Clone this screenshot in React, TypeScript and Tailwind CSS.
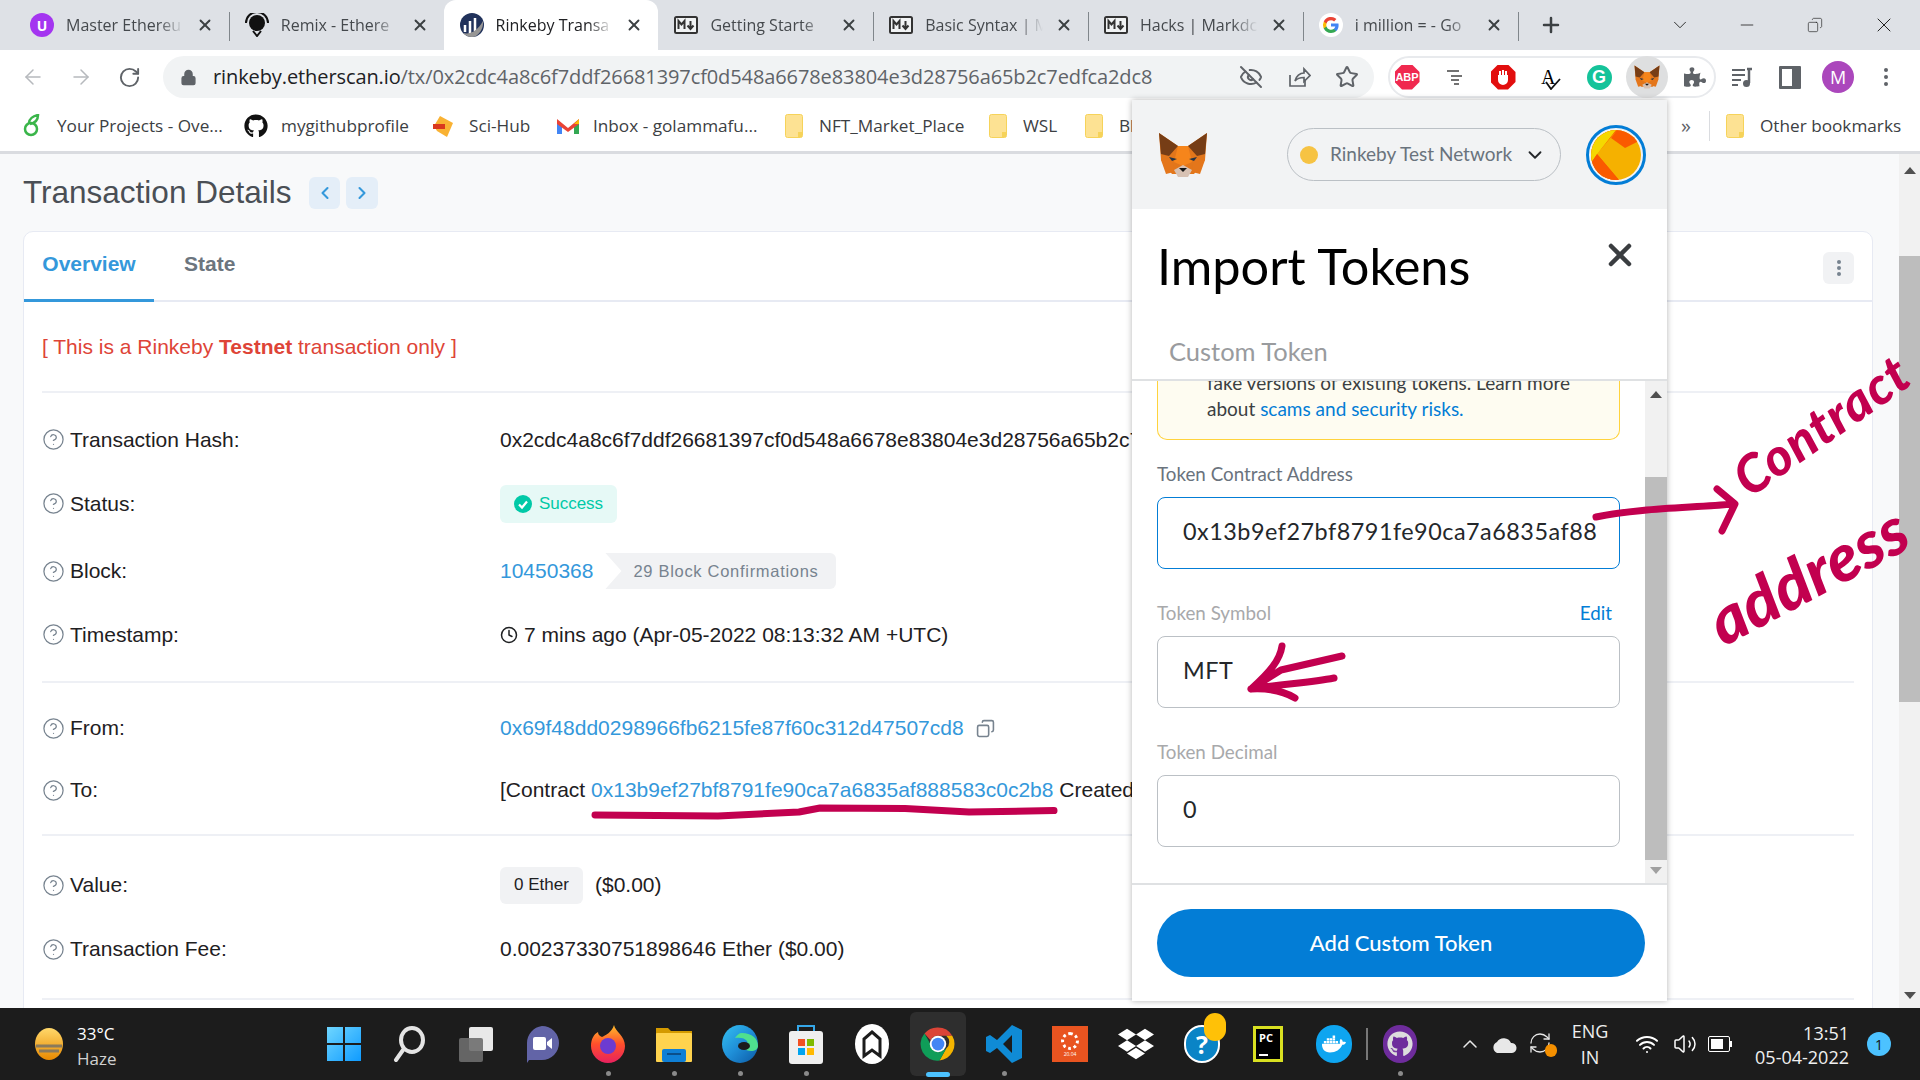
import React from "react";
import { ArrowLeft, ArrowRight, RotateCw, X, Plus, ChevronDown, ChevronUp, Minus, EyeOff, Star, Lock, ChevronLeft, ChevronRight, Copy, Clock, CircleHelp, Wifi, Volume2, RefreshCw } from "lucide-react";
import { FaGithub, FaDocker, FaDropbox, FaPuzzlePiece } from "react-icons/fa";

const MFox = ({ s = 50 }: { s?: number }) => (
  <svg width={s} height={s * 0.92} viewBox="0 0 50 46">
    <polygon points="1,1 20,14 30,14 49,1 47,28 36,42 14,42 3,28" fill="#e2761b" />
    <polygon points="1,1 20,14 11,24 3,22" fill="#763d16" />
    <polygon points="49,1 30,14 39,24 47,22" fill="#763d16" />
    <polygon points="20,14 30,14 34,30 25,34 16,30" fill="#f6851b" />
    <polygon points="3,28 14,26 16,40 8,42" fill="#e4761b" />
    <polygon points="47,28 36,26 34,40 42,42" fill="#e4761b" />
    <polygon points="11,25 19,27 14,29" fill="#233447" />
    <polygon points="39,25 31,27 36,29" fill="#233447" />
    <polygon points="16,38 25,33 34,38 30,45 20,45" fill="#d7c1b3" />
    <polygon points="21,36 29,36 25,40" fill="#161616" />
  </svg>
);

const ChromeIcon = ({ s = 32 }: { s?: number }) => (
  <svg width={s} height={s} viewBox="0 0 48 48">
    <path d="M24 2a22 22 0 0 1 19 11H24a11 11 0 0 0-10 6L6 10A22 22 0 0 1 24 2z" fill="#db4437" />
    <path d="M43 13a22 22 0 0 1-17 33l9-16a11 11 0 0 0 0-17z" fill="#f4b400" />
    <path d="M26 46A22 22 0 0 1 6 10l9 16a11 11 0 0 0 11 9l9-5z" fill="#0f9d58" />
    <circle cx="24" cy="24" r="11" fill="#fff" />
    <circle cx="24" cy="24" r="8.5" fill="#4285f4" />
  </svg>
);

const Folder = () => (
  <svg width="18" height="24" viewBox="0 0 18 24">
    <rect x="0.5" y="0.5" width="17" height="23" rx="2" fill="#fde293" stroke="#f6d35a" />
    <rect x="13" y="18" width="4" height="5" fill="#f6d35a" />
  </svg>
);

const MD = () => (
  <svg width="24" height="18" viewBox="0 0 24 18">
    <rect x="1" y="1" width="22" height="16" rx="1.5" fill="#f1f3f4" stroke="#333" strokeWidth="2" />
    <path d="M4.5 13V5l3 3.5 3-3.5v8M16.5 5v7M13.5 9.500l3 3.500 3-3.500" fill="none" stroke="#333" strokeWidth="2" />
  </svg>
);

const tabs = [
  { t: "Master Ethereu", i: <div className="flex h-6 w-6 items-center justify-center rounded-full bg-[#a435f0] text-[14px] font-bold text-white">U</div> },
  { t: "Remix - Ethere", i: <svg width="24" height="24" viewBox="0 0 24 24"><circle cx="12" cy="10" r="8" fill="#111" /><path d="M1 10a11 11 0 0 1 22 0M8 18l4 5 4-5" fill="none" stroke="#111" strokeWidth="2" /></svg> },
  { t: "Rinkeby Transa", a: true, i: <svg width="24" height="24" viewBox="0 0 24 24"><circle cx="12" cy="12" r="12" fill="#21325b" /><path d="M5 12v7M10 8v13M15 5v13" stroke="#fff" strokeWidth="2.500" /><path d="M3 20c8 2 15-3 20-12 1 8-5 16-11 16-4 0-7-2-9-4z" fill="#979695" /></svg> },
  { t: "Getting Starte", i: <MD /> },
  { t: "Basic Syntax | M", i: <MD /> },
  { t: "Hacks | Markdc", i: <MD /> },
  { t: "i million = - Go", i: <svg width="24" height="24" viewBox="0 0 24 24"><circle cx="12" cy="12" r="12" fill="#fff" /><path d="M19.600 12.200c0-.6-.1-1.100-.2-1.600H12v3h4.300a3.700 3.700 0 0 1-1.600 2.400v2h2.600c1.500-1.400 2.300-3.400 2.300-5.800z" fill="#4285f4" /><path d="M12 20c2.200 0 4-.7 5.300-2l-2.600-2a4.800 4.800 0 0 1-7.200-2.500H4.800v2.100A8 8 0 0 0 12 20z" fill="#34a853" /><path d="M7.500 13.500a4.800 4.800 0 0 1 0-3V8.400H4.800a8 8 0 0 0 0 7.200z" fill="#fbbc05" /><path d="M12 7.200c1.200 0 2.300.4 3.100 1.200l2.300-2.300A8 8 0 0 0 4.800 8.400l2.700 2.100A4.800 4.800 0 0 1 12 7.200z" fill="#ea4335" /></svg> },
];

function TabBar() {
  return (
    <div className="flex h-[50px] shrink-0 items-stretch bg-[#dee1e6] pl-[14px] font-['Open_Sans',sans-serif] text-[16px] text-[#45494d]">
      {tabs.map((t, i) => (
        <div key={i} className={`relative flex w-[214.800px] items-center gap-[12px] pl-[16px] pr-[15px] ${t.a ? "rounded-t-[12px] bg-white text-[#202124]" : ""}`}>
          <span className="flex w-[24px] shrink-0 justify-center">{t.i}</span>
          <span className="min-w-0 flex-1 overflow-hidden whitespace-nowrap [mask-image:linear-gradient(to_right,black_78%,transparent)]">{t.t}</span>
          <X size={18} strokeWidth={2.500} className="shrink-0 text-[#3c4043]" />
          {i !== 1 && i !== 2 && <span className="absolute -right-px top-[12px] h-[29px] w-px bg-[#80868b]" />}
        </div>
      ))}
      <div className="flex w-[66px] items-center justify-center">
        <Plus size={24} strokeWidth={2.500} className="text-[#3c4043]" />
      </div>
      <div className="flex flex-1 items-center text-[#222]">
        <ChevronDown size={22} strokeWidth={1} className="ml-[85px]" />
        <Minus size={20} strokeWidth={1} className="ml-[46px]" />
        <Copy size={16} strokeWidth={1} className="ml-[50px] -scale-x-100" />
        <X size={24} strokeWidth={1} className="ml-[49px]" />
      </div>
    </div>
  );
}

const tool = "flex w-[48px] shrink-0 items-center justify-center";

function Toolbar() {
  return (
    <div className="flex h-[54px] shrink-0 items-center bg-white pl-[9px] text-[#5f6368]">
      <span className={tool}><ArrowLeft size={24} strokeWidth={1.500} className="text-[#b6b9bd]" /></span>
      <span className={tool}><ArrowRight size={24} strokeWidth={1.500} className="text-[#b6b9bd]" /></span>
      <span className={tool}><RotateCw size={23} strokeWidth={2} /></span>
      <div className="ml-[10px] flex h-[42px] w-[1211px] items-center rounded-full bg-[#f1f3f4] pl-[17px] pr-[3px]">
        <Lock size={17} fill="#5f6368" strokeWidth={2} />
        <span className="ml-[16px] flex-1 whitespace-nowrap font-['Open_Sans',sans-serif] text-[20px] tracking-[-0.1px] text-[#5f6368]"><span className="text-[#202124]">rinkeby.etherscan.io</span>/tx/0x2cdc4a8c6f7ddf26681397cf0d548a6678e83804e3d28756a65b2c7edfca2dc8</span>
        <span className={tool}><EyeOff size={24} strokeWidth={2} /></span>
        <span className={tool}>
          <svg width="24" height="24" viewBox="0 0 24 24" fill="none" stroke="#5f6368" strokeWidth="1.700"><path d="M3 10v11h15v-6" /><path d="M8 16c1-5 5-8 9-8V4l6 6.500-6 6v-4c-4 0-7 1-9 3.500z" /></svg>
        </span>
        <span className={tool}><Star size={24} strokeWidth={2} /></span>
      </div>
      <div className="ml-[14px] flex h-[42px] w-[328px] items-center rounded-full border-2 border-[#e8eaed]">
        <div className="-mx-[7px] flex items-center">
          <span className={tool}>
            <span className="flex h-[25px] w-[25px] items-center justify-center bg-[#f0294f] font-['Liberation_Sans',sans-serif] text-[11px] font-bold text-white [clip-path:polygon(30%_0,70%_0,100%_30%,100%_70%,70%_100%,30%_100%,0_70%,0_30%)]">ABP</span>
          </span>
          <span className={tool}>
            <svg width="20" height="20" viewBox="0 0 20 20" stroke="#444" strokeWidth="1.600"><path d="M2 4h12M6 9h11M6 13h8M9 17h5" /></svg>
          </span>
          <span className={tool}>
            <span className="flex h-[25px] w-[25px] items-center justify-center bg-[#e20e0e] text-white [clip-path:polygon(30%_0,70%_0,100%_30%,100%_70%,70%_100%,30%_100%,0_70%,0_30%)]">
              <svg width="14" height="16" viewBox="0 0 14 16" fill="#fff"><path d="M2 6h10v5a5 5 0 0 1-10 0zM3 2h2v6H3zM6 1h2v6H6zM9 2h2v6H9z" /></svg>
            </span>
          </span>
          <span className={tool}>
            <span className="relative block h-[26px] w-[24px]">
              <span className="absolute left-[2px] top-[-2px] font-['Liberation_Serif',serif] text-[20px] text-black">A</span>
              <svg className="absolute bottom-0 left-[6px]" width="17" height="12" viewBox="0 0 17 12" fill="none" stroke="#111" strokeWidth="1.800"><path d="M1 4l5 7 9-10" /></svg>
            </span>
          </span>
          <span className={tool}>
            <span className="flex h-[25px] w-[25px] items-center justify-center rounded-full bg-[#15c39a] font-['Liberation_Sans',sans-serif] text-[18px] font-bold text-white">G</span>
          </span>
          <span className={tool}>
            <span className="flex h-[42px] w-[42px] items-center justify-center rounded-full bg-[#dedfe0]"><MFox s={26} /></span>
          </span>
          <span className={tool}><FaPuzzlePiece size={22} color="#5f6368" /></span>
        </div>
      </div>
      <span className={`${tool} ml-[2px]`}>
        <svg width="24" height="24" viewBox="0 0 24 24" fill="none" stroke="#5f6368" strokeWidth="2"><path d="M2 5h13M2 10h13M2 15h9M2 20h6" /><path d="M19 4v14" strokeWidth="2.500" /><circle cx="16.500" cy="18.500" r="2.500" fill="#5f6368" /><path d="M17 4h5" strokeWidth="2.500" /></svg>
      </span>
      <span className={tool}>
        <span className="flex h-[23px] w-[22px] justify-start rounded-[1px] border-[3px] border-r-[9px] border-[#5f6368]" />
      </span>
      <span className={tool}>
        <span className="flex h-[32px] w-[32px] items-center justify-center rounded-full bg-[#ab47bc] font-['Open_Sans',sans-serif] text-[18px] text-white">M</span>
      </span>
      <span className={`${tool} flex-col gap-[3px]`}>
        <i className="h-[4px] w-[4px] rounded-full bg-[#5f6368]" />
        <i className="h-[4px] w-[4px] rounded-full bg-[#5f6368]" />
        <i className="h-[4px] w-[4px] rounded-full bg-[#5f6368]" />
      </span>
    </div>
  );
}

const Bm = ({ w, icon, t }: { w: number; icon: React.ReactNode; t: string }) => (
  <div className="flex items-center gap-[13px]" style={{ width: w }}>
    <span className="flex w-[24px] shrink-0 justify-center">{icon}</span>
    <span className="whitespace-nowrap">{t}</span>
  </div>
);

function Bookmarks() {
  return (
    <div className="flex h-[50px] shrink-0 items-center border-b-[3px] border-[#dadce0] bg-white pb-[3px] pl-[20px] font-['Open_Sans',sans-serif] text-[17.200px] text-[#3c4043]">
      <Bm w={224} t="Your Projects - Ove..." icon={<svg width="18" height="24" viewBox="0 0 18 24" fill="none" stroke="#3ab54a" strokeWidth="2.500"><circle cx="8" cy="15" r="6" /><path d="M6 9c0-4 4-7 9-8 0 5-3 8-8 9" /></svg>} />
      <Bm w={188} t="mygithubprofile" icon={<FaGithub size={24} color="#111" />} />
      <Bm w={124} t="Sci-Hub" icon={<svg width="24" height="24" viewBox="0 0 24 24"><polygon points="8,2 21,9 15,23 5,17 2,12" fill="#f9b233" /><rect x="1" y="10" width="12" height="5" fill="#d9381e" /></svg>} />
      <Bm w={226} t="Inbox - golammafu..." icon={<svg width="24" height="18" viewBox="0 0 24 18"><path d="M1 3v14h5V7z" fill="#4285f4" /><path d="M23 3v14h-5V7z" fill="#34a853" /><path d="M1 2l11 9 11-9v5l-11 8L1 7z" fill="#ea4335" /><path d="M18 7l5-5v5z" fill="#fbbc04" /></svg>} />
      <Bm w={204} t="NFT_Market_Place" icon={<Folder />} />
      <Bm w={96} t="WSL" icon={<Folder />} />
      <Bm w={593} t="Bl" icon={<Folder />} />
      <span className="w-[22px] text-center text-[20px] text-[#5f6368]">»</span>
      <span className="ml-[12px] mr-[13px] h-[30px] w-px bg-[#dadce0]" />
      <Bm w={170} t="Other bookmarks" icon={<Folder />} />
    </div>
  );
}

const Row = ({ label, h, children }: { label: string; h: number; children: React.ReactNode }) => (
  <div className="flex items-center" style={{ height: h }}>
    <div className="flex w-[458px] items-center gap-[5px]">
      <CircleHelp size={23} strokeWidth={1.300} className="text-[#77838f]" />
      <span>{label}</span>
    </div>
    <div className="flex items-center whitespace-nowrap">{children}</div>
  </div>
);

function Page() {
  return (
    <div className="flex min-h-0 flex-1 bg-[#f8f9fa]">
      <div className="min-w-0 flex-1 overflow-hidden font-['Liberation_Sans',sans-serif] text-[21px] text-[#1e2022]">
        <div className="flex h-[77px] items-center pl-[23px] pt-[1px]">
          <h1 className="text-[31.500px] text-[#4a4f55]">Transaction Details</h1>
          <span className="ml-[18px] flex h-[32px] w-[31px] items-center justify-center rounded-md bg-[#e4eef8]"><ChevronLeft size={20} strokeWidth={2.500} className="text-[#3498db]" /></span>
          <span className="ml-[6px] flex h-[32px] w-[32px] items-center justify-center rounded-md bg-[#e4eef8]"><ChevronRight size={20} strokeWidth={2.500} className="text-[#3498db]" /></span>
        </div>
        <div className="ml-[23px] mr-[26px] h-[900px] rounded-t-[10px] border border-[#e7eaf3] bg-white">
          <div className="flex h-[70px] items-end justify-between border-b-2 border-[#e7eaf3]">
            <div className="flex h-[70px]">
              <span className="-mb-[2px] flex w-[130px] items-center justify-center border-b-[3px] border-[#3498db] pb-[2px] font-bold text-[#3498db]">Overview</span>
              <span className="ml-[30px] flex items-center pb-[2px] font-bold text-[#6c757e]">State</span>
            </div>
            <span className="mb-[16px] mr-[18px] flex h-[32px] w-[31px] flex-col items-center justify-center gap-[2px] rounded-md bg-[#f1f2f4]">
              <i className="h-[4px] w-[4px] rounded-full bg-[#77838f]" />
              <i className="h-[4px] w-[4px] rounded-full bg-[#77838f]" />
              <i className="h-[4px] w-[4px] rounded-full bg-[#77838f]" />
            </span>
          </div>
          <div className="mx-[18px]">
            <div className="flex h-[91px] items-center border-b-2 border-[#eef0f5] text-[#de4437]">
              [ This is a Rinkeby&nbsp;<b>Testnet</b>&nbsp;transaction only ]
            </div>
            <div className="border-b-2 border-[#eef0f5] pb-[19px] pt-[14px]">
              <Row label="Transaction Hash:" h={65}>0x2cdc4a8c6f7ddf26681397cf0d548a6678e83804e3d28756a65b2c7edfca2dc8</Row>
              <Row label="Status:" h={63}>
                <span className="flex h-[38px] w-[117px] items-center justify-center gap-[7px] rounded-md bg-[#e6f9f6] text-[17px] text-[#00c9a7]">
                  <svg width="18" height="18" viewBox="0 0 18 18"><circle cx="9" cy="9" r="9" fill="#00c9a7" /><path d="M5 9.500l3 3 5-6" fill="none" stroke="#fff" strokeWidth="2.200" /></svg>
                  Success
                </span>
              </Row>
              <Row label="Block:" h={72}>
                <span className="text-[#3498db]">10450368</span>
                <span className="ml-[12px] flex h-[36px] w-[231px] items-center rounded-r-md bg-[#f1f2f4] pl-[28px] text-[16.500px] tracking-[0.7px] text-[#77838f] [clip-path:polygon(0_0,100%_0,100%_100%,0_100%,16px_50%)]">29 Block Confirmations</span>
              </Row>
              <Row label="Timestamp:" h={55}>
                <Clock size={18} strokeWidth={2} className="mr-[6px]" />7 mins ago (Apr-05-2022 08:13:32 AM +UTC)
              </Row>
            </div>
            <div className="border-b-2 border-[#eef0f5] pb-[13px] pt-[14px]">
              <Row label="From:" h={62}>
                <span className="text-[#3498db]">0x69f48dd0298966fb6215fe87f60c312d47507cd8</span>
                <Copy size={19} strokeWidth={2} className="ml-[12px] -scale-x-100 text-[#77838f]" />
              </Row>
              <Row label="To:" h={62}>[Contract&nbsp;<span className="text-[#3498db]">0x13b9ef27bf8791fe90ca7a6835af888583c0c2b8</span>&nbsp;Created</Row>
            </div>
            <div className="border-b-2 border-[#eef0f5] pb-[17px] pt-[17px]">
              <Row label="Value:" h={64}>
                <span className="flex h-[37px] w-[83px] items-center justify-center rounded-md bg-[#f1f2f4] text-[17px]">0 Ether</span>
                <span className="ml-[12px]">($0.00)</span>
              </Row>
              <Row label="Transaction Fee:" h={64}>0.00237330751898646 Ether ($0.00)</Row>
            </div>
          </div>
        </div>
      </div>
      <div className="relative flex w-[21px] shrink-0 flex-col items-center bg-[#f1f1f1]">
        <span className="mt-[13px] h-0 w-0 border-x-[6px] border-b-[7px] border-x-transparent border-b-[#505050]" />
        <span className="mt-[82px] h-[446px] w-full bg-[#bdbdbd]" />
        <span className="mb-[9px] mt-auto h-0 w-0 border-x-[6px] border-t-[7px] border-x-transparent border-t-[#505050]" />
      </div>
    </div>
  );
}

const Field = ({ label, value, edit, muted, focus, h }: { label: string; value: string; edit?: boolean; muted?: boolean; focus?: boolean; h: number }) => (
  <div style={{ height: h }}>
    <div className="flex h-[35px] items-center justify-between pr-[8px] text-[18.800px]">
      <span className={muted ? "text-[#a8a9ab]" : "text-[#6a737d]"}>{label}</span>
      {edit && <span className="text-[#037dd6]">Edit</span>}
    </div>
    <div className={`mt-[5px] flex h-[72px] items-center overflow-hidden rounded-[8px] border bg-white pb-[2px] pl-[25px] pr-[24px] text-[23.400px] tracking-[0.5px] text-[#24272a] ${focus ? "border-[#037dd6]" : "border-[#bbc0c5]"}`}>
      <span className="whitespace-nowrap">{value}</span>
    </div>
  </div>
);

function Popup() {
  return (
    <div className="absolute left-[1132px] top-[100px] flex h-[901px] w-[535px] flex-col bg-white font-['Lato',sans-serif] shadow-[0_0_6px_rgba(0,0,0,0.3)]">
      <div className="flex h-[109px] shrink-0 items-center bg-[#f2f3f4] pl-[26px]">
        <MFox s={50} />
        <div className="ml-[79px] flex h-[53px] w-[274px] items-center rounded-full border border-[#bbc0c5] pl-[12px]">
          <span className="h-[18px] w-[18px] rounded-full bg-[#f6c343]" />
          <span className="ml-[12px] flex-1 whitespace-nowrap text-[19px] text-[#6a737d]">Rinkeby Test Network</span>
          <ChevronDown size={22} strokeWidth={2} className="mr-[14px] text-[#24272a]" />
        </div>
        <span className="ml-[25px] block h-[60px] w-[60px] rounded-full border-[3px] border-[#037dd6] p-[2px]">
          <svg viewBox="0 0 50 50" className="h-full w-full rounded-full">
            <rect width="50" height="50" fill="#f5b100" />
            <path d="M26 0L6 24l22 26H0V0z" fill="#fa5a00" />
            <path d="M0 0h25L7 23 0 33z" fill="#f5d800" />
            <path d="M26 0h24v10L34 18 20 8z" fill="#fa5a00" />
            <path d="M6 24L0 33v17h28z" fill="#fa5a00" />
          </svg>
        </span>
      </div>
      <div className="relative shrink-0 border-b-2 border-[#dfe1e3]">
        <h2 className="flex h-[115px] items-center pl-[25px] text-[50.500px] leading-none text-black">Import Tokens</h2>
        <X size={36} strokeWidth={3} className="absolute right-[29px] top-[28px] text-[#3a3d40]" />
        <div className="flex h-[55px] items-start pl-[37px] pt-[10px] text-[25.500px] leading-[34px] text-[#999b9e]">Custom Token</div>
      </div>
      <div className="flex min-h-0 flex-1">
        <div className="min-w-0 flex-1 overflow-hidden pl-[25px]">
          <div className="mr-[1px] h-[59px] w-[463px] overflow-hidden rounded-b-[10px] border border-t-0 border-[#ffd33d] bg-[#fefcf1] pl-[49px] text-[19px] leading-[26px] text-[#3b3f42]">
            <div className="-mt-[11px] whitespace-nowrap">fake versions of existing tokens. Learn more</div>
            <div className="whitespace-nowrap">about <span className="text-[#037dd6]">scams and security risks.</span></div>
          </div>
          <div className="mt-[17px]" />
          <div className="w-[463px]">
            <Field label="Token Contract Address" value="0x13b9ef27bf8791fe90ca7a6835af88" focus h={139} />
            <Field label="Token Symbol" value="MFT" edit muted h={139} />
            <Field label="Token Decimal" value="0" muted h={112} />
          </div>
        </div>
        <div className="flex w-[22px] shrink-0 flex-col items-center bg-[#f1f1f1]">
          <span className="mt-[10px] h-0 w-0 border-x-[6px] border-b-[7px] border-x-transparent border-b-[#505050]" />
          <span className="mt-[79px] h-[383px] w-full bg-[#bdbdbd]" />
          <span className="mt-[7px] h-0 w-0 border-x-[6px] border-t-[7px] border-x-transparent border-t-[#a0a0a0]" />
        </div>
      </div>
      <div className="flex h-[118px] shrink-0 items-start border-t-2 border-[#dfe1e3] pl-[25px] pt-[24px]">
        <div className="flex h-[68px] w-[488px] items-center justify-center rounded-full bg-[#037dd6] pb-[2px] text-[22px] font-medium text-white">Add Custom Token</div>
      </div>
    </div>
  );
}

function Ink() {
  return (
    <>
      <svg className="pointer-events-none absolute left-0 top-0" width="1920" height="1080" fill="none" stroke="#c2004f" strokeLinecap="round" strokeLinejoin="round">
        <path d="M595 815L718 816 799 812 820 808 905 808.500 969 812 1054 810.600" strokeWidth="7" />
        <path d="M1596 517C1640 508 1690 508 1733 504M1717 489L1735 504 1722 531" strokeWidth="7" />
        <path d="M1342 656L1281 670 1251 689M1282 646C1280 660 1270 672 1251 689M1334 678C1310 683 1280 684 1251 689 1270 688 1285 692 1295 698" strokeWidth="7" />
      </svg>
      <span className="pointer-events-none absolute left-[1738px] top-[456px] origin-left -rotate-[35deg] whitespace-nowrap font-['Lato',sans-serif] text-[52px] font-black italic leading-none tracking-[1px] text-[#c2004f]">Contract</span>
      <span className="pointer-events-none absolute left-[1712px] top-[592px] origin-left -rotate-[28deg] whitespace-nowrap font-['Lato',sans-serif] text-[66px] font-black italic leading-none text-[#c2004f]">address</span>
    </>
  );
}

const Slot = ({ children, dot, sel }: { children: React.ReactNode; dot?: boolean; sel?: boolean }) => (
  <div className="relative flex h-[72px] w-[66px] shrink-0 items-center justify-center">
    {sel && <span className="absolute inset-x-[5px] inset-y-[4px] rounded-md bg-[#2e2e2e]" />}
    <span className="relative flex items-center justify-center">{children}</span>
    {dot && <span className="absolute bottom-[4px] h-[5px] w-[5px] rounded-full bg-[#8a8a8a]" />}
    {sel && <span className="absolute bottom-[3px] h-[5px] w-[24px] rounded-full bg-[#4cc2ff]" />}
  </div>
);

function Taskbar() {
  return (
    <div className="flex h-[72px] shrink-0 items-center bg-[#1c1c1c] font-['Open_Sans',sans-serif] text-white">
      <div className="flex w-[311px] shrink-0 items-center pl-[34px]">
        <svg width="30" height="34" viewBox="0 0 30 34"><defs><linearGradient id="sun" x1="0" y1="0" x2="0" y2="1"><stop offset="0" stopColor="#ffd86b" /><stop offset="1" stopColor="#e98a00" /></linearGradient></defs><ellipse cx="15" cy="17" rx="14" ry="16" fill="url(#sun)" /><path d="M2 19h26M5 24h20" stroke="#8a7a5c" strokeWidth="3" /></svg>
        <div className="ml-[13px] pt-[4px] text-[17px] leading-[25px]">
          <div>33°C</div>
          <div className="text-[#d0d0d0]">Haze</div>
        </div>
      </div>
      <Slot>
        <svg width="36" height="36" viewBox="0 0 36 36"><defs><linearGradient id="win" x1="0" y1="0" x2="1" y2="1"><stop offset="0" stopColor="#6fd6ff" /><stop offset="1" stopColor="#0f9bff" /></linearGradient></defs><path d="M1 1h16v16H1zM19 1h16v16H19zM1 19h16v16H1zM19 19h16v16H19z" fill="url(#win)" /></svg>
      </Slot>
      <Slot>
        <svg width="34" height="36" viewBox="0 0 34 36" fill="none" stroke="#e4e4e4"><ellipse cx="19" cy="14" rx="11" ry="12" strokeWidth="4" /><path d="M10 24L3 34" strokeWidth="4" strokeLinecap="round" /></svg>
      </Slot>
      <Slot>
        <svg width="36" height="36" viewBox="0 0 36 36"><rect x="11" y="1" width="24" height="24" rx="2" fill="#e8e8e8" /><rect x="1" y="12" width="24" height="24" rx="2" fill="#6e6e6e" fillOpacity="0.900" /></svg>
      </Slot>
      <Slot>
        <svg width="36" height="38" viewBox="0 0 36 38"><path d="M18 1a17 17 0 0 1 0 34H5l-2 3V18A17 17 0 0 1 18 1z" fill="#6264a7" /><rect x="9" y="12" width="13" height="13" rx="2" fill="#fff" /><path d="M23 17l5-4v11l-5-4z" fill="#fff" /></svg>
      </Slot>
      <Slot dot>
        <svg width="36" height="38" viewBox="0 0 36 38"><defs><linearGradient id="ff" x1="0" y1="0" x2="0" y2="1"><stop offset="0" stopColor="#ffbd2b" /><stop offset="0.500" stopColor="#ff4f2b" /><stop offset="1" stopColor="#e8215f" /></linearGradient></defs><path d="M24 0c1 6 11 11 11 21a17 17 0 0 1-34 0C1 14 4 9 8 7c0 3 2 4 4 5 4-2 10-5 12-12z" fill="url(#ff)" /><circle cx="18" cy="21" r="8" fill="#6c3bd1" /></svg>
      </Slot>
      <Slot dot>
        <svg width="36" height="36" viewBox="0 0 36 36"><path d="M0 2h12l3 3h21v6H0z" fill="#d49a00" /><rect y="7" width="36" height="29" rx="1" fill="#ffd34e" /><rect x="6" y="23" width="24" height="13" rx="2" fill="#0f7fd6" /><rect x="11" y="27" width="14" height="2" fill="#0b4e8a" /></svg>
      </Slot>
      <Slot dot>
        <svg width="36" height="38" viewBox="0 0 36 38"><defs><linearGradient id="edge" x1="0" y1="0" x2="1" y2="1"><stop offset="0" stopColor="#35c1f1" /><stop offset="0.500" stopColor="#1f8fd8" /><stop offset="1" stopColor="#0c59a4" /></linearGradient></defs><ellipse cx="18" cy="19" rx="18" ry="19" fill="url(#edge)" /><path d="M20 8c9 0 16 5 16 13 0 3-3 5-7 5-3 0-6-1-7-3 3-1 5-3 3-7-2-3-7-4-12-3 2-3 4-5 7-5z" fill="#4fe08e" /><ellipse cx="22" cy="21" rx="6" ry="4" fill="#1c1c1c" /></svg>
      </Slot>
      <Slot dot>
        <svg width="34" height="40" viewBox="0 0 34 40"><path d="M9 8V2h16v6" fill="none" stroke="#35a7e8" strokeWidth="2" /><rect y="7" width="34" height="33" rx="3" fill="#efefef" /><rect x="9" y="15" width="7" height="7" fill="#f25022" /><rect x="18" y="15" width="7" height="7" fill="#7fba00" /><rect x="9" y="24" width="7" height="7" fill="#00a4ef" /><rect x="18" y="24" width="7" height="7" fill="#ffb900" /></svg>
      </Slot>
      <Slot>
        <svg width="34" height="40" viewBox="0 0 34 40"><ellipse cx="17" cy="20" rx="17" ry="20" fill="#fff" /><path d="M17 8l8 7v17l-8-6-8 6V15z" fill="none" stroke="#1c1c1c" strokeWidth="3" /></svg>
      </Slot>
      <Slot sel><ChromeIcon s={36} /></Slot>
      <Slot dot>
        <svg width="36" height="40" viewBox="0 0 36 40"><path d="M26 1l10 5v28l-10 5-15-15-7 5-4-2V13l4-2 7 5zM26 11l-9 9 9 9z" fill="#0f8bd6" fillRule="evenodd" /></svg>
      </Slot>
      <Slot>
        <div className="flex h-[36px] w-[36px] flex-col items-center justify-center bg-[#e95420]">
          <span className="h-[18px] w-[18px] rounded-full border-[3px] border-dotted border-white" />
          <span className="mt-[2px] text-[5px] leading-none text-white">20.04</span>
        </div>
      </Slot>
      <Slot><FaDropbox size={36} color="#fff" /></Slot>
      <Slot>
        <div className="relative flex h-[38px] w-[36px] items-center justify-center rounded-full border-2 border-white bg-[#0a84c6] text-[25px] font-bold leading-none">?
          <span className="absolute -right-[8px] -top-[14px] h-[28px] w-[22px] rounded-full bg-[#ffc107]" />
        </div>
      </Slot>
      <Slot>
        <div className="flex h-[36px] w-[30px] flex-col justify-between border-[3px] border-[#d9e021] bg-black p-[3px] text-[11px] font-bold leading-none">
          <span>PC</span>
          <span className="h-[2px] w-[9px] bg-white" />
        </div>
      </Slot>
      <Slot>
        <div className="flex h-[38px] w-[36px] items-center justify-center rounded-full bg-[#0ea5f0]"><FaDocker size={24} color="#fff" /></div>
      </Slot>
      <span className="-mx-px h-[32px] w-[2px] bg-[#777]" />
      <Slot dot>
        <div className="flex h-[38px] w-[34px] items-center justify-center rounded-full bg-[#6e2c9c]"><FaGithub size={26} color="#ddd" /></div>
      </Slot>
      <ChevronUp size={24} strokeWidth={1.500} className="ml-[25px] text-[#e8e8e8]" />
      <svg className="ml-[9px]" width="26" height="18" viewBox="0 0 26 18"><path d="M6 18a6 6 0 0 1 0-11 8 8 0 0 1 14 1 5 5 0 0 1 1 10z" fill="#e8e8e8" /></svg>
      <span className="relative ml-[11px] block h-[26px] w-[26px]">
        <RefreshCw size={24} strokeWidth={1.300} className="text-[#e8e8e8]" />
        <span className="absolute -right-[3px] bottom-[0px] h-[13px] w-[12px] rounded-full bg-[#f59000]" />
      </span>
      <div className="ml-[16px] w-[40px] text-center text-[18px] leading-[26px] text-[#eee]">
        <div>ENG</div>
        <div>IN</div>
      </div>
      <Wifi size={24} strokeWidth={2} className="ml-[25px]" />
      <Volume2 size={24} strokeWidth={1.500} className="ml-[14px]" />
      <span className="relative ml-[11px] block h-[16px] w-[22px] rounded-[2px] border border-white p-[2px]"><span className="block h-full w-[12px] bg-white" /><span className="absolute -right-[3px] top-[4px] h-[6px] w-[2px] bg-white" /></span>
      <div className="ml-[15px] w-[104px] pt-[2px] text-right text-[18px] leading-[24px] text-[#f0f0f0]">
        <div>13:51</div>
        <div className="whitespace-nowrap">05-04-2022</div>
      </div>
      <span className="ml-[18px] flex h-[24px] w-[24px] items-center justify-center rounded-full bg-[#4cc2ff] text-[14px] text-[#111]">1</span>
    </div>
  );
}

export default function App() {
  return (
    <div className="relative flex h-[1080px] w-[1920px] flex-col overflow-hidden">
      <TabBar />
      <Toolbar />
      <Bookmarks />
      <Page />
      <Taskbar />
      <Popup />
      <Ink />
    </div>
  );
}
